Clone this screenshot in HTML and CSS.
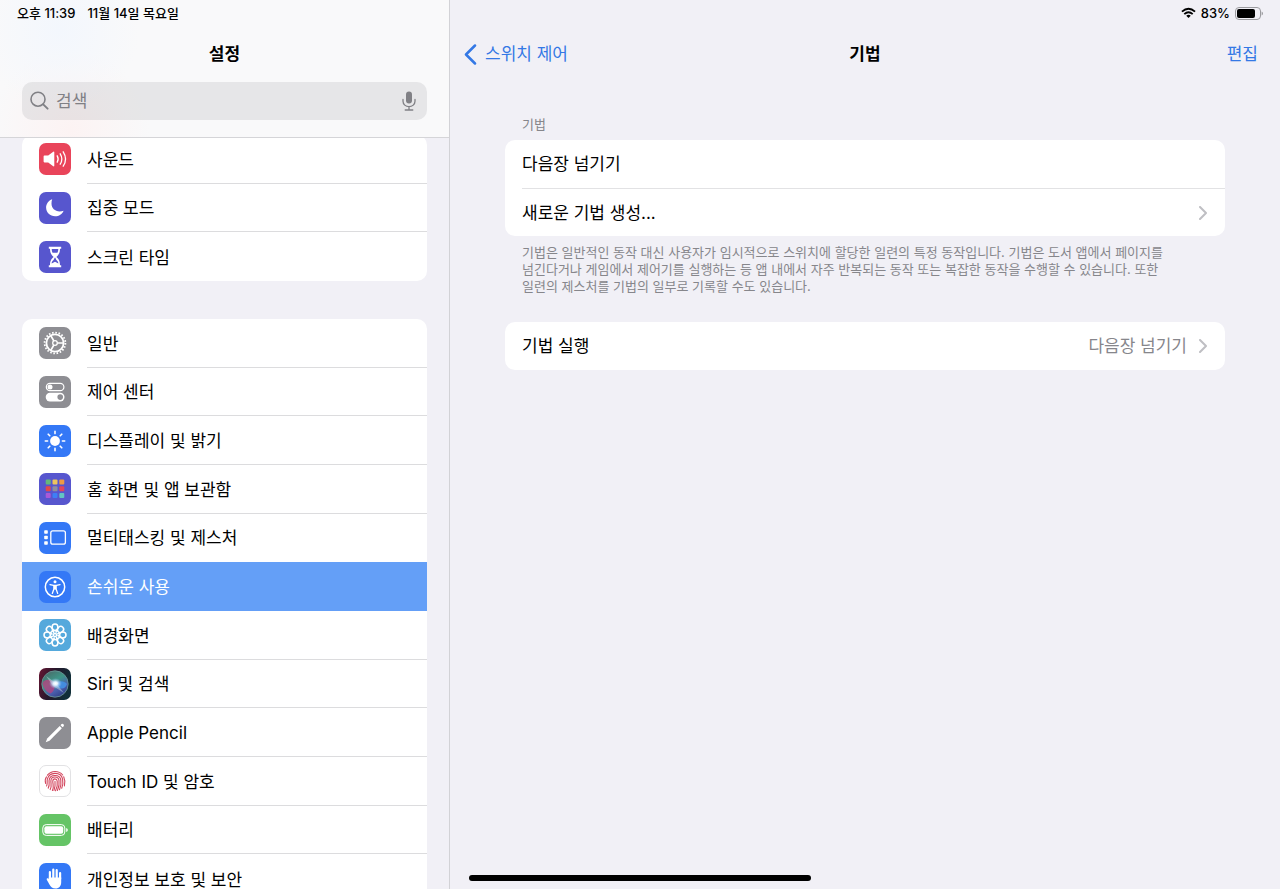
FILE: index.html
```
<!DOCTYPE html>
<html lang="ko">
<head>
    <meta charset="UTF-8">
    <meta name="viewport" content="width=device-width, initial-scale=1.0">
    <title>설정</title>
    <link rel="stylesheet" href="styles.css">
</head>
<body>
<div class="container">
    <aside class="sidebar">
        <header class="side-header">
            <div class="status">
                <span>오후 11:39</span>
                <span>11월 14일 목요일</span>
            </div>
            <h1 class="title">설정</h1>
            <div class="search">
                <svg class="search-icon" viewBox="0 0 20 20" fill="none" stroke="#808085" stroke-linecap="round">
                    <circle cx="8" cy="8.2" r="7" stroke-width="1.6"/>
                    <path d="M13.2 13.4L17.6 17.6" stroke-width="2"/>
                </svg>
                <input type="text" id="search" aria-label="검색" placeholder="검색">
                <button class="mic" aria-label="받아쓰기">
                    <svg viewBox="0 0 14 20" fill="none" stroke="#808085" stroke-width="1.3" stroke-linecap="round">
                        <rect x="4" y="0.6" width="6" height="12" rx="3" fill="#808085" stroke="none"/>
                        <path d="M1 8.5v1.8a6 5.4 0 0 0 12 0V8.5M7 15.8v3M3.2 19h7.6"/>
                    </svg>
                </button>
            </div>
        </header>

        <nav class="menu">
            <div class="list list-top">
                <a class="row" href="#">
                    <svg class="icon red" viewBox="0 0 32 32">
                        <path d="M5.4 12.6h3.8l4.7-3.7q1.4-.8 1.4.6v13q0 1.4-1.4.6l-4.7-3.7H5.4q-.8 0-.8-.8v-5.2q0-.8.8-.8z" fill="#fff"/>
                        <path d="M18.2 12.8q1.9 3.2 0 6.400M21.2 10.8q3.3 5.2 0 10.4M24.2 8.8q4.7 7.2 0 14.4" fill="none" stroke="#fff" stroke-width="1.3" stroke-linecap="round"/>
                    </svg>
                    <span class="label">사운드</span>
                </a>
                <a class="row" href="#">
                    <svg class="icon indigo" viewBox="0 0 32 32">
                        <path d="M13.2 7.3C9.5 8.6 7.1 12 7.1 15.6c0 4.9 4 8.7 9 8.7 3.9 0 7.2-2.2 8.5-5.6-1.300.6-2.5.8-3.9.8-4.9 0-8.2-3.3-8.2-7.9 0-1.5.2-2.9.7-4.3z" fill="#fff"/>
                    </svg>
                    <span class="label">집중 모드</span>
                </a>
                <a class="row" href="#">
                    <svg class="icon indigo" viewBox="0 0 32 32">
                        <path d="M9.8 5.8h12.4v2h-1.2c0 4.5-1.3 6-3.6 8.2 2.3 2.2 3.6 3.7 3.6 8.2h1.2v2H9.8v-2H11c0-4.5 1.300-6 3.6-8.2C12.3 13.8 11 12.3 11 7.8H9.8z" fill="#fff"/>
                        <path d="M12.7 8h6.6c-.1 1.7-.3 2.7-.9 3.7h-4.8c-.6-1-.8-2-.9-3.7zM15.5 16.8h1c.1 2.6 2.8 2.6 2.9 5.8l-3.4-1.8-3.4 1.8c.1-3.2 2.8-3.2 2.9-5.8z" fill="#5756ce"/>
                    </svg>
                    <span class="label">스크린 타임</span>
                </a>
            </div>

            <div class="list list-main">
                <a class="row" href="#">
                    <svg class="icon gray" viewBox="0 0 32 32" fill="none" stroke="#fff">
                        <circle cx="16" cy="16" r="10.4" stroke-width="1.8" stroke-dasharray="1.6 1.667"/>
                        <circle cx="16" cy="16" r="8.6" stroke-width="1.8"/>
                        <circle cx="16" cy="16" r="2.3" stroke-width="1.3"/>
                        <path d="M18.3 16H24.5M14.9 14L11.7 8.5M14.9 18L11.7 23.5" stroke-width="1.6"/>
                    </svg>
                    <span class="label">일반</span>
                </a>
                <a class="row" href="#">
                    <svg class="icon gray" viewBox="0 0 32 32">
                        <rect x="7.300" y="7.300" width="17.6" height="7.4" rx="3.7" fill="none" stroke="#fff" stroke-width="1.2"/>
                        <circle cx="11" cy="11" r="2.5" fill="#fff"/>
                        <rect x="6.7" y="16.8" width="18.8" height="8.6" rx="4.3" fill="#fff"/>
                        <circle cx="21.2" cy="21.1" r="2.8" fill="#8e8e93"/>
                    </svg>
                    <span class="label">제어 센터</span>
                </a>
                <a class="row" href="#">
                    <svg class="icon blue" viewBox="0 0 32 32">
                        <circle cx="16" cy="16" r="4.9" fill="#fff"/>
                        <path d="M16 6.3v2.3M16 23.4v2.3M6.3 16h2.3M23.4 16h2.3M9.2 9.2l1.6 1.6M21.2 21.2l1.6 1.6M9.2 22.8l1.6-1.6M21.2 10.8l1.6-1.6" stroke="#fff" stroke-width="1.6" stroke-linecap="round"/>
                    </svg>
                    <span class="label">디스플레이 및 밝기</span>
                </a>
                <a class="row" href="#">
                    <svg class="icon indigo" viewBox="0 0 32 32">
                        <rect x="6.7" y="6.5" width="5" height="5" rx="1" fill="#65b87b"/>
                        <rect x="13.5" y="6.5" width="5" height="5" rx="1" fill="#eec45d"/>
                        <rect x="20.3" y="6.5" width="5" height="5" rx="1" fill="#ee9a45"/>
                        <rect x="6.7" y="13.3" width="5" height="5" rx="1" fill="#e1484d"/>
                        <rect x="13.5" y="13.3" width="5" height="5" rx="1" fill="#8e8ea0"/>
                        <rect x="20.3" y="13.3" width="5" height="5" rx="1" fill="#e0455f"/>
                        <rect x="6.7" y="20.1" width="5" height="5" rx="1" fill="#a959d8"/>
                        <rect x="13.5" y="20.1" width="5" height="5" rx="1" fill="#3d7ff5"/>
                        <rect x="20.3" y="20.1" width="5" height="5" rx="1" fill="#62c4c3"/>
                    </svg>
                    <span class="label">홈 화면 및 앱 보관함</span>
                </a>
                <a class="row before-selected" href="#">
                    <svg class="icon blue" viewBox="0 0 32 32" fill="#fff">
                        <rect x="5.2" y="8.2" width="3.6" height="3.6" rx="0.8"/>
                        <rect x="5.2" y="13.7" width="3.6" height="3.6" rx="0.8"/>
                        <rect x="5.2" y="19.2" width="3.6" height="3.6" rx="0.8"/>
                        <rect x="11.8" y="8.8" width="14.6" height="13.4" rx="2" fill="none" stroke="#fff" stroke-width="1.3"/>
                    </svg>
                    <span class="label">멀티태스킹 및 제스처</span>
                </a>
                <a class="row selected" href="#" aria-current="page">
                    <svg class="icon blue" viewBox="0 0 32 32" fill="none" stroke="#fff" stroke-linecap="round" stroke-linejoin="round">
                        <circle cx="16" cy="16" r="9.7" stroke-width="1.5"/>
                        <circle cx="16" cy="10.7" r="1.5" fill="#fff" stroke="none"/>
                        <path d="M11 13.6l3.6.8h2.8l3.6-.8M14.9 14.8v3.3l-1.6 4.3M17.1 14.8v3.3l1.6 4.3" stroke-width="1.3"/>
                        <path d="M14.7 14.2h2.6v4.2h-2.6z" fill="#fff" stroke="none"/>
                    </svg>
                    <span class="label">손쉬운 사용</span>
                </a>
                <a class="row" href="#">
                    <svg class="icon sky" viewBox="0 0 32 32" fill="none" stroke="#fff" stroke-width="1.5">
                        <ellipse cx="16" cy="8.2" rx="2.9" ry="3.2"/>
                        <ellipse cx="16" cy="8.2" rx="2.9" ry="3.2" transform="rotate(45 16 16)"/>
                        <ellipse cx="16" cy="8.2" rx="2.9" ry="3.2" transform="rotate(90 16 16)"/>
                        <ellipse cx="16" cy="8.2" rx="2.9" ry="3.2" transform="rotate(135 16 16)"/>
                        <ellipse cx="16" cy="8.2" rx="2.9" ry="3.2" transform="rotate(180 16 16)"/>
                        <ellipse cx="16" cy="8.2" rx="2.9" ry="3.2" transform="rotate(225 16 16)"/>
                        <ellipse cx="16" cy="8.2" rx="2.9" ry="3.2" transform="rotate(270 16 16)"/>
                        <ellipse cx="16" cy="8.2" rx="2.9" ry="3.2" transform="rotate(315 16 16)"/>
                        <circle cx="16" cy="16" r="3.600" stroke-dasharray="1.7 1.127" stroke-width="2.4"/>
                        <circle cx="16" cy="16" r="1.600"/>
                    </svg>
                    <span class="label">배경화면</span>
                </a>
                <a class="row" href="#">
                    <svg class="icon" viewBox="0 0 32 32">
                        <defs>
                            <linearGradient id="siri-bg" x1="0" y1="0" x2="1" y2="0.3">
                                <stop offset="0" stop-color="#681633"/>
                                <stop offset="0.5" stop-color="#25172b"/>
                                <stop offset="1" stop-color="#102e38"/>
                            </linearGradient>
                            <linearGradient id="siri-orb" x1="0.2" y1="0" x2="0.8" y2="1">
                                <stop offset="0" stop-color="#4a6a68"/>
                                <stop offset="0.4" stop-color="#3e9688"/>
                                <stop offset="0.7" stop-color="#4a5fae"/>
                                <stop offset="1" stop-color="#2c3a80"/>
                            </linearGradient>
                            <radialGradient id="siri-glow">
                                <stop offset="0" stop-color="#fff"/>
                                <stop offset="0.3" stop-color="#e5f5ff"/>
                                <stop offset="1" stop-color="#8ab9f0" stop-opacity="0"/>
                            </radialGradient>
                        </defs>
                        <rect width="32" height="32" fill="url(#siri-bg)"/>
                        <circle cx="16" cy="16" r="13.2" fill="url(#siri-orb)" stroke="#6d9a9a" stroke-width="0.8"/>
                        <path d="M3.500 15c3-5 9-4 13 1-1 5-2 8-5 9.500C7 24 4 20 3.500 15z" fill="#c43a80" opacity="0.7"/>
                        <path d="M16 16c4-4 9-3 12 0-2 6-8 6-12 0z" fill="#4290e4" opacity="0.9"/>
                        <path d="M7 8l10 7 8 10-11-7z" fill="#d9f3f3" opacity="0.4"/>
                        <ellipse cx="16.5" cy="15.5" rx="6.5" ry="5.5" fill="url(#siri-glow)"/>
                    </svg>
                    <span class="label">Siri 및 검색</span>
                </a>
                <a class="row" href="#">
                    <svg class="icon gray" viewBox="0 0 32 32" fill="#fff">
                        <path d="M6.7 25.2l1.5-3.8L20.7 9l2.2 2.2L10.5 23.7z"/>
                        <path d="M21.5 8.2l1.1-1.1q1-.7 1.9.2.9.9.2 1.9l-1.1 1.1z"/>
                    </svg>
                    <span class="label">Apple Pencil</span>
                </a>
                <a class="row" href="#">
                    <svg class="icon touch" viewBox="1 1 30 30" fill="none" stroke="#d3475f" stroke-width="1.1" stroke-linecap="round">
                        <path d="M8.400 10.2A9.9 9.9 0 0 1 23.7 10M6.6 18.5C5.9 15.5 6.5 13 7.5 11.8M24.7 11.7c1.3 2.8 1.6 6 .7 9.2"/>
                        <path d="M7.6 21C8.8 19 7.8 16.6 8.3 14.4 9.9 6.5 22 6.3 23.6 14.2c.6 3 .3 6.2-.9 9"/>
                        <path d="M9.2 23.1C11 20.2 9.8 17.5 10.1 15.2c.8-6.2 10.8-6.3 11.7-.3.5 3.4.1 6.7-1.3 9.8"/>
                        <path d="M11.2 24.6c1.9-3.3.5-6.4.7-8.9.3-4.8 7.5-4.9 8.1-.2.5 3.6-.1 6.9-1.6 10"/>
                        <path d="M13.4 25.5c2-3.6.2-6.7.4-9.5.2-2.9 4-2.9 4.4 0 .5 3.6-.1 6.8-1.7 9.7"/>
                        <path d="M16 16.2c.4 3.6 0 6.4-1 9.2"/>
                    </svg>
                    <span class="label">Touch ID 및 암호</span>
                </a>
                <a class="row" href="#">
                    <svg class="icon green" viewBox="0 0 32 32">
                        <rect x="3.8" y="10.6" width="22" height="10.8" rx="3.4" fill="none" stroke="#fff" stroke-width="1"/>
                        <rect x="5.4" y="12.2" width="18.8" height="7.6" rx="2" fill="#fff"/>
                        <path d="M27.2 13.9q1.6.6 1.6 2.1t-1.6 2.1z" fill="#fff"/>
                    </svg>
                    <span class="label">배터리</span>
                </a>
                <a class="row" href="#">
                    <svg class="icon blue" viewBox="0 0 32 32" fill="none" stroke="#fff" stroke-width="2.2" stroke-linecap="round" stroke-linejoin="round">
                        <path d="M10.900 16V9M14.3 15V6.600M17.7 15V7.2M21.1 16V10"/>
                        <path d="M9.8 15h12.4v4.4c0 3.9-2 6.6-5.7 6.6-3 0-4.7-1.5-5.9-3.8l-2.8-5c-.6-1.300.9-2 2-.7z" fill="#fff" stroke="none" transform="translate(0 -0.5)"/>
                    </svg>
                    <span class="label">개인정보 보호 및 보안</span>
                </a>
            </div>
        </nav>
    </aside>

    <main class="detail">
        <div class="status status-right">
            <svg class="wifi" viewBox="0 0 16 12" fill="none" stroke="#000" stroke-width="2">
                <path d="M1 4.5Q8-1.6 15 4.5M3.5 7.2Q8 3.2 12.5 7.2"/>
                <path d="M5.6 8.900Q8 7 10.4 8.900L8 11.4z" fill="#000" stroke="none"/>
            </svg>
            <span>83%</span>
            <svg class="battery" viewBox="0 0 28 13">
                <rect x="0.5" y="0.5" width="25" height="12" rx="3.5" fill="none" stroke="#9b9b9f"/>
                <rect x="2" y="2" width="18" height="9" rx="2" fill="#000"/>
                <path d="M26.6 4.5q1.4.5 1.4 2t-1.4 2z" fill="#9b9b9f"/>
            </svg>
        </div>
        <div class="nav-bar">
            <a class="back" href="#">
                <svg viewBox="0 0 13 21" fill="none" stroke="#3478e5" stroke-width="2.5" stroke-linecap="round" stroke-linejoin="round">
                    <path d="M11 1.500L2 10.5L11 19.5"/>
                </svg>
                스위치 제어
            </a>
            <h2 class="title">기법</h2>
            <button class="edit">편집</button>
        </div>

        <section class="content">
            <h3 class="section-name">기법</h3>
            <div class="card">
                <a class="item" href="#">다음장 넘기기</a>
                <a class="item" href="#">
                    새로운 기법 생성...
                    <svg class="chevron" viewBox="0 0 8 14"><path d="M1 1L7 7L1 13"/></svg>
                </a>
            </div>
            <p class="note">기법은 일반적인 동작 대신 사용자가 임시적으로 스위치에 할당한 일련의 특정 동작입니다. 기법은 도서 앱에서 페이지를 넘긴다거나 게임에서 제어기를 실행하는 등 앱 내에서 자주 반복되는 동작 또는 복잡한 동작을 수행할 수 있습니다. 또한 일련의 제스처를 기법의 일부로 기록할 수도 있습니다.</p>
            <div class="card">
                <a class="item" href="#">
                    기법 실행
                    <span class="value">다음장 넘기기</span>
                    <svg class="chevron" viewBox="0 0 8 14"><path d="M1 1L7 7L1 13"/></svg>
                </a>
            </div>
        </section>
    </main>
</div>
<div class="home-bar"></div>
</body>
</html>
```

FILE: styles.css
```
*{
    box-sizing: border-box;
}
body{
    margin: 0;
    background-color: #f1f0f6;
    color: #000;
    font-family: Inter, "Noto Sans CJK KR", sans-serif;
    font-size: 17px;
    line-height: 24px;
    word-break: keep-all;
}
a{
    color: inherit;
    text-decoration: none;
}
button{
    padding: 0;
    border: 0;
    background: none;
    font: inherit;
    cursor: pointer;
}
svg{
    display: block;
    flex: none;
}
.container{
    display: grid;
    grid-template-columns: 45fr 83fr;
    height: 100vh;
    overflow: hidden;
}

/* left side */
.sidebar{
    display: flex;
    flex-direction: column;
    min-height: 0;
    border-right: 1px solid #d2d2d6;
}
.side-header{
    flex: none;
    padding-bottom: 17px;
    border-bottom: 1px solid #d5d5d8;
    background: radial-gradient(circle at 60px 30px, #f3f7fd, transparent 80px),
                radial-gradient(circle at 70px 130px, #fcf3f3, transparent 80px),
                #f9f9fa;
}
.status{
    display: flex;
    align-items: center;
    gap: 12px;
    height: 26px;
    padding: 0 17px;
    font-size: 13px;
    font-weight: 500;
}
.title{
    margin: 0;
    font-size: 17px;
    font-weight: 600;
    text-align: center;
}
.side-header .title{
    padding: 16px 0;
}
.search{
    display: flex;
    align-items: center;
    gap: 6px;
    height: 38px;
    margin: 0 22px;
    padding: 0 11px 0 8px;
    border-radius: 10px;
    background-color: rgba(118, 118, 128, 0.14);
}
.search-icon{
    width: 20px;
    height: 20px;
}
.search input{
    flex: 1;
    min-width: 0;
    padding: 0;
    border: 0;
    outline: 0;
    background: none;
    font: inherit;
}
.search input::placeholder{
    color: #808085;
}
.mic svg{
    width: 14px;
    height: 20px;
}
.menu{
    flex: 1;
    min-height: 0;
    padding: 0 22px;
    overflow: hidden;
}
.list{
    display: grid;
    grid-auto-rows: 1fr;
    overflow: hidden;
    border-radius: 10px;
    background-color: #fff;
}
/* scrolled a little under the header */
.list-top{
    min-height: 146px;
    margin-top: -3px;
    margin-bottom: 38px;
}
.list-main{
    min-height: 584px;
}
.row{
    display: flex;
    align-items: center;
    gap: 16px;
    padding-left: 17px;
}
.icon{
    width: 32px;
    height: 32px;
    border-radius: 7px;
}
.label{
    display: flex;
    align-items: center;
    align-self: stretch;
    flex: 1;
    padding-top: 2px;
    border-bottom: 1px solid #dcdcde;
}
.row:last-child .label{
    border-bottom: 0;
}
.selected{
    background-color: #649ff7;
    color: #fff;
}
.selected .label,
.before-selected .label{
    border-color: transparent;
}
.red{
    background-color: #e9445a;
}
.indigo{
    background-color: #5756ce;
}
.gray{
    background-color: #8e8e93;
}
.blue{
    background-color: #3478f6;
}
.sky{
    background-color: #55a9dc;
}
.green{
    background-color: #65c466;
}
.touch{
    border: 1px solid #e2e2e4;
    background-color: #fff;
}

/* right side */
.detail{
    min-width: 0;
}
.status-right{
    justify-content: flex-end;
    gap: 5px;
}
.wifi{
    width: 15px;
    height: 12px;
}
.battery{
    width: 28px;
    height: 13px;
}
.nav-bar{
    display: grid;
    grid-template-columns: 1fr auto 1fr;
    align-items: center;
    padding: 16px 14px 0;
}
.back{
    display: flex;
    align-items: center;
    gap: 8px;
    color: #3478e5;
}
.back svg{
    width: 13px;
    height: 21px;
}
.edit{
    justify-self: end;
    padding-right: 8px;
    color: #3478e5;
}
.content{
    padding: 49px 55px 0;
}
.section-name{
    margin: 0;
    padding: 0 17px 7px;
    color: #86868b;
    font-size: 13px;
    font-weight: 400;
    line-height: 18px;
}
.card{
    border-radius: 10px;
    background-color: #fff;
}
.item{
    display: flex;
    align-items: center;
    min-height: 48px;
    margin-left: 17px;
    padding-right: 18px;
}
.item + .item{
    border-top: 1px solid #e2e2e4;
}
.chevron{
    width: 8px;
    height: 14px;
    margin-left: auto;
    fill: none;
    stroke: #bfbfc3;
    stroke-width: 2;
    stroke-linecap: round;
    stroke-linejoin: round;
}
.value{
    margin-left: auto;
    color: #86868b;
}
.value + .chevron{
    margin-left: 12px;
}
.note{
    margin: 0;
    padding: 8px 38px 27px 17px;
    color: #86868b;
    font-size: 13px;
    line-height: 17px;
}
/* lies over the page */
.home-bar{
    position: absolute;
    bottom: 8px;
    left: 50%;
    width: 342px;
    height: 6px;
    margin-left: -171px;
    border-radius: 3px;
    background-color: #000;
}
```
